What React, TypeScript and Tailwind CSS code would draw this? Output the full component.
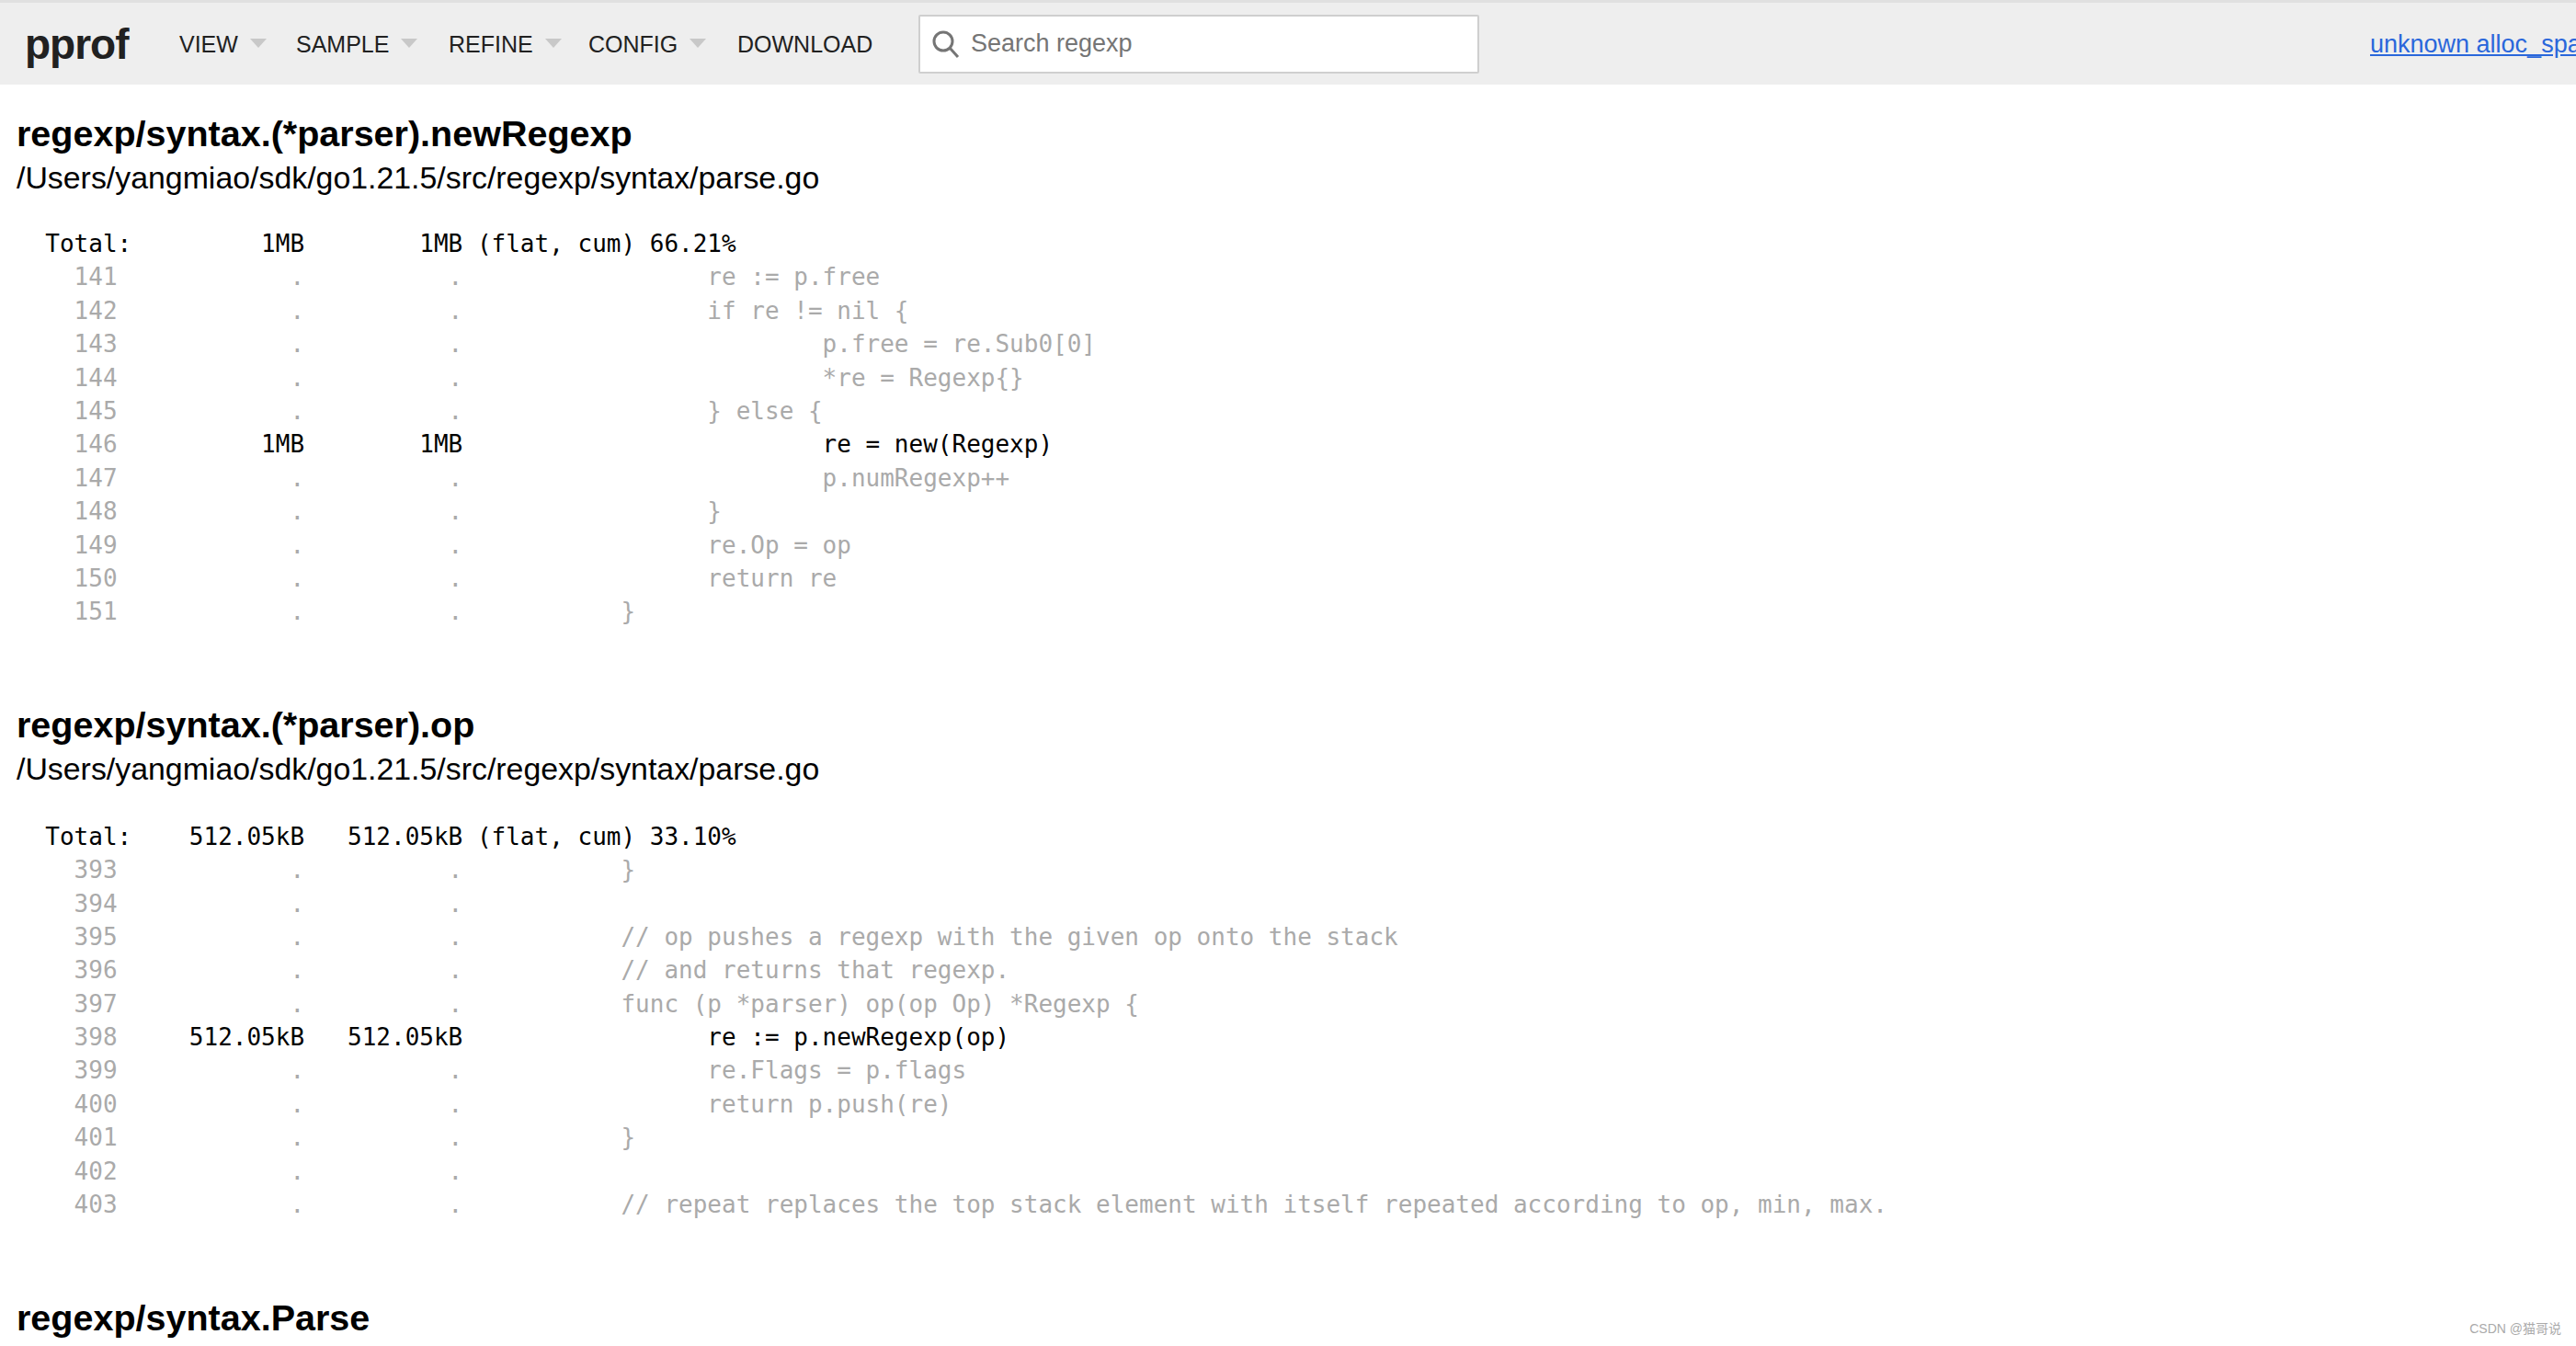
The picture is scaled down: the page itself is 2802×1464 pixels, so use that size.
const Tri = () => (
  <span className="ml-[13px] mt-[-2px] h-0 w-0 border-x-[9px] border-t-[10px] border-x-transparent border-t-[#c8c8c8]" />
);

const MenuItem = ({ label, width, arrow = true }: { label: string; width: string; arrow?: boolean }) => (
  <div className={`flex shrink-0 items-center ${width}`}>
    <span className="mt-[2px] text-[25px] text-[#212121]">{label}</span>
    {arrow && <Tri />}
  </div>
);

type Row = [string, string, string, string];

const block1: Row[] = [
  ["141", ".", ".", "      re := p.free"],
  ["142", ".", ".", "      if re != nil {"],
  ["143", ".", ".", "              p.free = re.Sub0[0]"],
  ["144", ".", ".", "              *re = Regexp{}"],
  ["145", ".", ".", "      } else {"],
  ["146", "1MB", "1MB", "              re = new(Regexp)"],
  ["147", ".", ".", "              p.numRegexp++"],
  ["148", ".", ".", "      }"],
  ["149", ".", ".", "      re.Op = op"],
  ["150", ".", ".", "      return re"],
  ["151", ".", ".", "}"],
];

const block2: Row[] = [
  ["393", ".", ".", "}"],
  ["394", ".", ".", ""],
  ["395", ".", ".", "// op pushes a regexp with the given op onto the stack"],
  ["396", ".", ".", "// and returns that regexp."],
  ["397", ".", ".", "func (p *parser) op(op Op) *Regexp {"],
  ["398", "512.05kB", "512.05kB", "      re := p.newRegexp(op)"],
  ["399", ".", ".", "      re.Flags = p.flags"],
  ["400", ".", ".", "      return p.push(re)"],
  ["401", ".", ".", "}"],
  ["402", ".", ".", ""],
  ["403", ".", ".", "// repeat replaces the top stack element with itself repeated according to op, min, max."],
];

const Listing = ({ flat, cum, pct, rows, top }: { flat: string; cum: string; pct: string; rows: Row[]; top: string }) => (
  <pre className={`ml-[18px] ${top} font-['DejaVu_Sans_Mono',monospace] text-[26px] leading-[36.4px] text-black`}>
    <div>{`  Total:${flat.padStart(12)}${cum.padStart(11)} (flat, cum) ${pct}`}</div>
    {rows.map((r) => {
      const hot = r[1] !== ".";
      return (
        <div key={r[0]} className="h-[36.4px]">
          <span className="text-[#aaaaaa]">{`    ${r[0]}`}</span>
          <span className={hot ? "text-black" : "text-[#aaaaaa]"}>{r[1].padStart(13)}{r[2].padStart(11)}</span>
          <span className={hot ? "text-black" : "text-[#aaaaaa]"}>{"           "}{r[3]}</span>
        </div>
      );
    })}
  </pre>
);

const Section = ({ name, children }: { name: string; children?: React.ReactNode }) => (
  <section>
    <h1 className="ml-[18px] text-[39.5px] font-bold leading-[48px] text-black">{name}</h1>
    {children}
  </section>
);

export default function App() {
  return (
    <div className="relative h-[1464px] w-[2802px] overflow-hidden bg-white font-['Liberation_Sans',sans-serif]">
      <header className="flex h-[92px] items-center overflow-hidden border-t-[3px] border-[#e0e0e0] bg-[#eeeeee]">
        <span className="ml-[27px] w-[168px] shrink-0 text-[46px] font-bold leading-none tracking-[-1px] text-[#212121]">pprof</span>
        <MenuItem label="VIEW" width="w-[127px]" />
        <MenuItem label="SAMPLE" width="w-[166px]" />
        <MenuItem label="REFINE" width="w-[152px]" />
        <MenuItem label="CONFIG" width="w-[162px]" />
        <MenuItem label="DOWNLOAD" width="w-[197px]" arrow={false} />
        <div className="flex h-[64px] w-[610px] shrink-0 items-center rounded-[2px] border-2 border-[#cfcfcf] bg-white">
          <svg className="ml-[12px] h-[32px] w-[32px] shrink-0" viewBox="0 0 32 32" fill="none" stroke="#757575" strokeWidth="3">
            <circle cx="13" cy="13" r="10" />
            <path d="M20 20 L29 30" />
          </svg>
          <span className="ml-[11px] text-[27px] text-[#757575]">Search regexp</span>
        </div>
        <a className="ml-[969px] mt-[2px] shrink-0 whitespace-nowrap text-[27px] text-[#2a67db] underline">unknown alloc_space</a>
      </header>
      <main className="pt-[29px]">
        <Section name="regexp/syntax.(*parser).newRegexp">
          <div className="ml-[18px] text-[33.86px] leading-[48px] text-black">/Users/yangmiao/sdk/go1.21.5/src/regexp/syntax/parse.go</div>
          <Listing top="mt-[30px]" flat="1MB" cum="1MB" pct="66.21%" rows={block1} />
        </Section>
        <div className="h-[80px]" />
        <Section name="regexp/syntax.(*parser).op">
          <div className="ml-[18px] text-[33.86px] leading-[48px] text-black">/Users/yangmiao/sdk/go1.21.5/src/regexp/syntax/parse.go</div>
          <Listing top="mt-[32px]" flat="512.05kB" cum="512.05kB" pct="33.10%" rows={block2} />
        </Section>
        <div className="h-[81px]" />
        <Section name="regexp/syntax.Parse" />
      </main>
      <span className="absolute bottom-[8px] right-[16px] font-['Liberation_Sans','Noto_Sans_CJK_SC',sans-serif] text-[14px] text-[#aaaaaa]">CSDN @猫哥说</span>
    </div>
  );
}
